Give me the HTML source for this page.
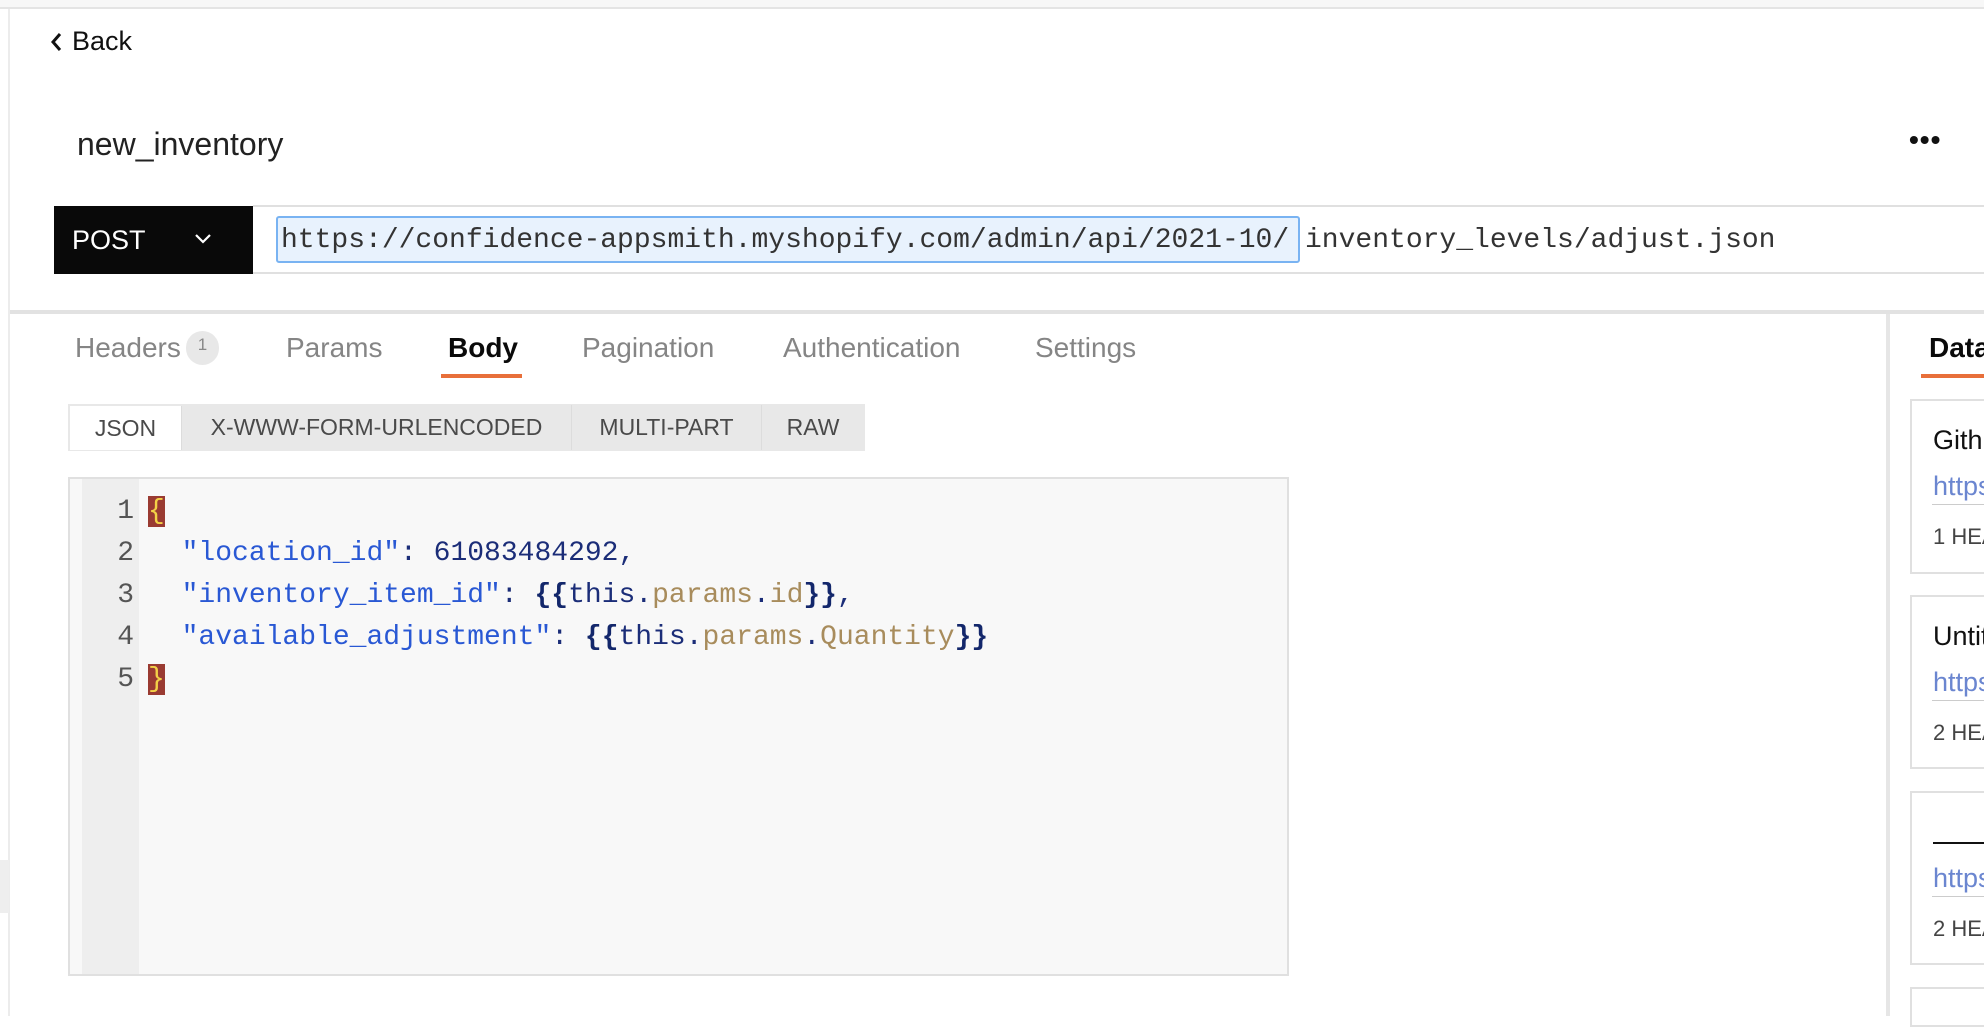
<!DOCTYPE html>
<html><head><meta charset="utf-8"><style>
*{margin:0;padding:0;box-sizing:border-box}
body{width:1984px;height:1016px;overflow:hidden;background:#fff;font-family:"Liberation Sans",sans-serif;position:relative}
.a{position:absolute;white-space:nowrap}
.mono{font-family:"Liberation Mono",monospace}
.tab{position:absolute;top:330px;font-size:28px;color:#858585;line-height:36px}
.seg{position:absolute;top:405px;height:45px;line-height:45px;font-size:23px;color:#4a4a4a;text-align:center;background:#e8e8e8;border-right:1px solid #dcdcdc}
.ln{position:absolute;left:82px;width:52px;text-align:right;font-size:28px;color:#555;font-family:"Liberation Mono",monospace;line-height:42px}
.cl{position:absolute;left:148px;font-size:28px;font-family:"Liberation Mono",monospace;line-height:42px;white-space:pre}
.k{color:#2958d4}.n{color:#1b2d78}.b{color:#13276b;font-weight:bold}.p{color:#a88c5c}.t{color:#1b2d78}
.br{background:#9a3b32;color:#f3d247}
.card{position:absolute;left:1910px;width:80px;border:2px solid #e0e0e0;border-right:none}
</style></head><body>
<div class="a" style="left:0;top:0;width:1984px;height:9px;background:#f7f7f7;border-bottom:2px solid #e4e4e4"></div>
<div class="a" style="left:8px;top:9px;width:2px;height:1007px;background:#ececec"></div>
<div class="a" style="left:0;top:860px;width:9px;height:53px;background:#eee"></div>

<svg class="a" style="left:49px;top:31px" width="14" height="22" viewBox="0 0 14 22"><path d="M11 3 L4 11 L11 19" fill="none" stroke="#111" stroke-width="3"/></svg>
<div class="a" style="left:72px;top:26px;font-size:27px;color:#111">Back</div>
<div class="a" style="left:77px;top:126px;font-size:32px;color:#222">new_inventory</div>
<div class="a" style="left:1909px;top:124px;font-size:28px;color:#111;font-weight:bold;letter-spacing:1px">•••</div>

<div class="a" style="left:253px;top:205px;width:1731px;height:69px;border-top:2px solid #e0e0e0;border-bottom:2px solid #e0e0e0"></div>
<div class="a" style="left:54px;top:206px;width:199px;height:68px;background:#090909"></div>
<div class="a" style="left:72px;top:225px;font-size:27px;color:#fff">POST</div>
<svg class="a" style="left:193px;top:232px" width="20" height="14" viewBox="0 0 20 14"><path d="M3 3 L10 10 L17 3" fill="none" stroke="#fff" stroke-width="2.2"/></svg>
<div class="a" style="left:276px;top:216px;width:1024px;height:47px;background:#e8f2fd;border:2px solid #79b3f2;border-radius:3px"></div>
<div class="a mono" style="left:281px;top:224px;font-size:28px;color:#333;line-height:34px">https://confidence-appsmith.myshopify.com/admin/api/2021-10/</div>
<div class="a mono" style="left:1305px;top:224px;font-size:28px;color:#333;line-height:34px">inventory_levels/adjust.json</div>

<div class="a" style="left:10px;top:310px;width:1974px;height:4px;background:#e2e2e2"></div>
<div class="a" style="left:1886px;top:314px;width:4px;height:702px;background:#e6e6e6"></div>

<div class="tab" style="left:75px">Headers</div>
<div class="a" style="left:186px;top:331px;width:33px;height:34px;border-radius:17px;background:#e8e8e8;color:#888;font-size:17px;text-align:center;line-height:28px">1</div>
<div class="tab" style="left:286px">Params</div>
<div class="tab" style="left:448px;color:#0a0a0a;font-weight:bold">Body</div>
<div class="a" style="left:441px;top:374px;width:81px;height:4px;background:#e86f3a"></div>
<div class="tab" style="left:582px">Pagination</div>
<div class="tab" style="left:783px">Authentication</div>
<div class="tab" style="left:1035px">Settings</div>
<div class="tab" style="left:1929px;color:#0a0a0a;font-weight:bold">Data</div>
<div class="a" style="left:1921px;top:374px;width:63px;height:4px;background:#e86f3a"></div>

<div class="a" style="left:68px;top:404px;width:797px;height:47px;background:#e8e8e8"></div>
<div class="seg" style="left:70px;width:112px;background:#fff;top:406px;height:44px;line-height:44px">JSON</div>
<div class="seg" style="left:182px;width:390px">X-WWW-FORM-URLENCODED</div>
<div class="seg" style="left:572px;width:190px">MULTI-PART</div>
<div class="seg" style="left:762px;width:102px;border-right:none">RAW</div>

<div class="a" style="left:68px;top:477px;width:1221px;height:499px;background:#f8f8f8;border:2px solid #e0e0e0"></div>
<div class="a" style="left:82px;top:479px;width:57px;height:495px;background:#eeeeee"></div>
<div class="ln" style="top:491px">1</div>
<div class="ln" style="top:533px">2</div>
<div class="ln" style="top:575px">3</div>
<div class="ln" style="top:617px">4</div>
<div class="ln" style="top:659px">5</div>
<div class="cl" style="top:491px"><span class="br">{</span></div>
<div class="cl" style="top:533px">  <span class="k">"location_id"</span><span class="n">: 61083484292,</span></div>
<div class="cl" style="top:575px">  <span class="k">"inventory_item_id"</span><span class="n">: </span><span class="b">{{</span><span class="t">this</span><span class="n">.</span><span class="p">params</span><span class="n">.</span><span class="p">id</span><span class="b">}}</span><span class="n">,</span></div>
<div class="cl" style="top:617px">  <span class="k">"available_adjustment"</span><span class="n">: </span><span class="b">{{</span><span class="t">this</span><span class="n">.</span><span class="p">params</span><span class="n">.</span><span class="p">Quantity</span><span class="b">}}</span></div>
<div class="cl" style="top:659px"><span class="br">}</span></div>

<div class="card" style="top:399px;height:175px"></div>
<div class="a" style="left:1933px;top:425px;font-size:27px;color:#111">Github</div>
<div class="a" style="left:1933px;top:471px;font-size:27px;color:#6b86d0">https</div>
<div class="a" style="left:1932px;top:504px;width:52px;height:1px;background:#ccc"></div>
<div class="a" style="left:1933px;top:524px;font-size:22px;color:#444">1 HEADERS</div>

<div class="card" style="top:595px;height:174px"></div>
<div class="a" style="left:1933px;top:621px;font-size:27px;color:#111">Untitled</div>
<div class="a" style="left:1933px;top:667px;font-size:27px;color:#6b86d0">https</div>
<div class="a" style="left:1932px;top:700px;width:52px;height:1px;background:#ccc"></div>
<div class="a" style="left:1933px;top:720px;font-size:22px;color:#444">2 HEADERS</div>

<div class="card" style="top:791px;height:174px"></div>
<div class="a" style="left:1933px;top:842px;width:51px;height:2px;background:#111"></div>
<div class="a" style="left:1933px;top:863px;font-size:27px;color:#6b86d0">https</div>
<div class="a" style="left:1932px;top:896px;width:52px;height:1px;background:#ccc"></div>
<div class="a" style="left:1933px;top:916px;font-size:22px;color:#444">2 HEADERS</div>

<div class="card" style="top:987px;height:40px"></div>
</body></html>
